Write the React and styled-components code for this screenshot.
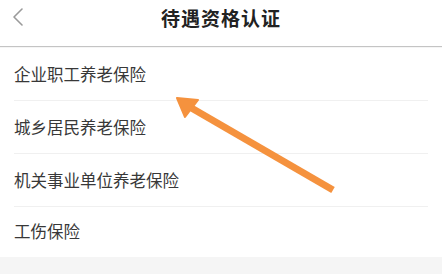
import styled, { createGlobalStyle } from "styled-components";

const GlobalStyle = createGlobalStyle`
    html, body {
        margin: 0;
        padding: 0;
        background: #f5f5f5;
    }
    * { box-sizing: border-box; }
`;

const items = [
    "企业职工养老保险",
    "城乡居民养老保险",
    "机关事业单位养老保险",
    "工伤保险",
];

export default function App() {
    return (
        <Page>
            <GlobalStyle />
            <Header>
                <Back>
                    <svg width="12" height="20" viewBox="0 0 12 20">
                        <path d="M10 2 L2 10 L10 18" fill="none" stroke="#9a9a9a" strokeWidth="1.6" strokeLinecap="round" strokeLinejoin="round" />
                    </svg>
                </Back>
                <Title>待遇资格认证</Title>
            </Header>
            <List>
                {items.map((name, i) => (
                    <Row key={name} last={i === items.length - 1}>
                        <Label>{name}</Label>
                    </Row>
                ))}
            </List>
            <Arrow width="442" height="274" viewBox="0 0 442 274">
                <line x1="333" y1="190" x2="188" y2="106" stroke="#f5923e" strokeWidth="7" strokeLinecap="butt" />
                <polygon points="177,98 198,100 185,117" fill="#f5923e" stroke="#f5923e" strokeWidth="2" strokeLinejoin="round" />
            </Arrow>
        </Page>
    );
}

const Page = styled.div`
    position: relative;
    width: 442px;
    height: 274px;
    background: #f5f5f5;
    font-family: "Noto Sans CJK SC", "Noto Sans", sans-serif;
    overflow: hidden;
`;

const Header = styled.div`
    position: relative;
    height: 47px;
    background: #fff;
    border-bottom: 1.5px solid #c4c4c4;
    display: flex;
    align-items: center;
    justify-content: center;
`;

const Back = styled.div`
    position: absolute;
    left: 12px;
    top: 7px;
    display: flex;
`;

const Title = styled.div`
    font-size: 19px;
    font-weight: 700;
    color: #222;
    letter-spacing: 1px;
    margin-top: -12px;
`;

const List = styled.div`
    background: #fff;
    padding: 0 14px;
    margin-top: 1px;
    display: flex;
    flex-direction: column;
`;

const Row = styled.div`
    height: ${props => props.last ? "50px" : "53px"};
    padding-bottom: ${props => props.last ? "2px" : "0"};
    display: flex;
    align-items: center;
    border-bottom: ${props => props.last ? "none" : "1px solid #f0f0f0"};
`;

const Label = styled.span`
    font-size: 16.5px;
    color: #383838;
`;

const Arrow = styled.svg`
    position: absolute;
    left: 0;
    top: 0;
    pointer-events: none;
`;
